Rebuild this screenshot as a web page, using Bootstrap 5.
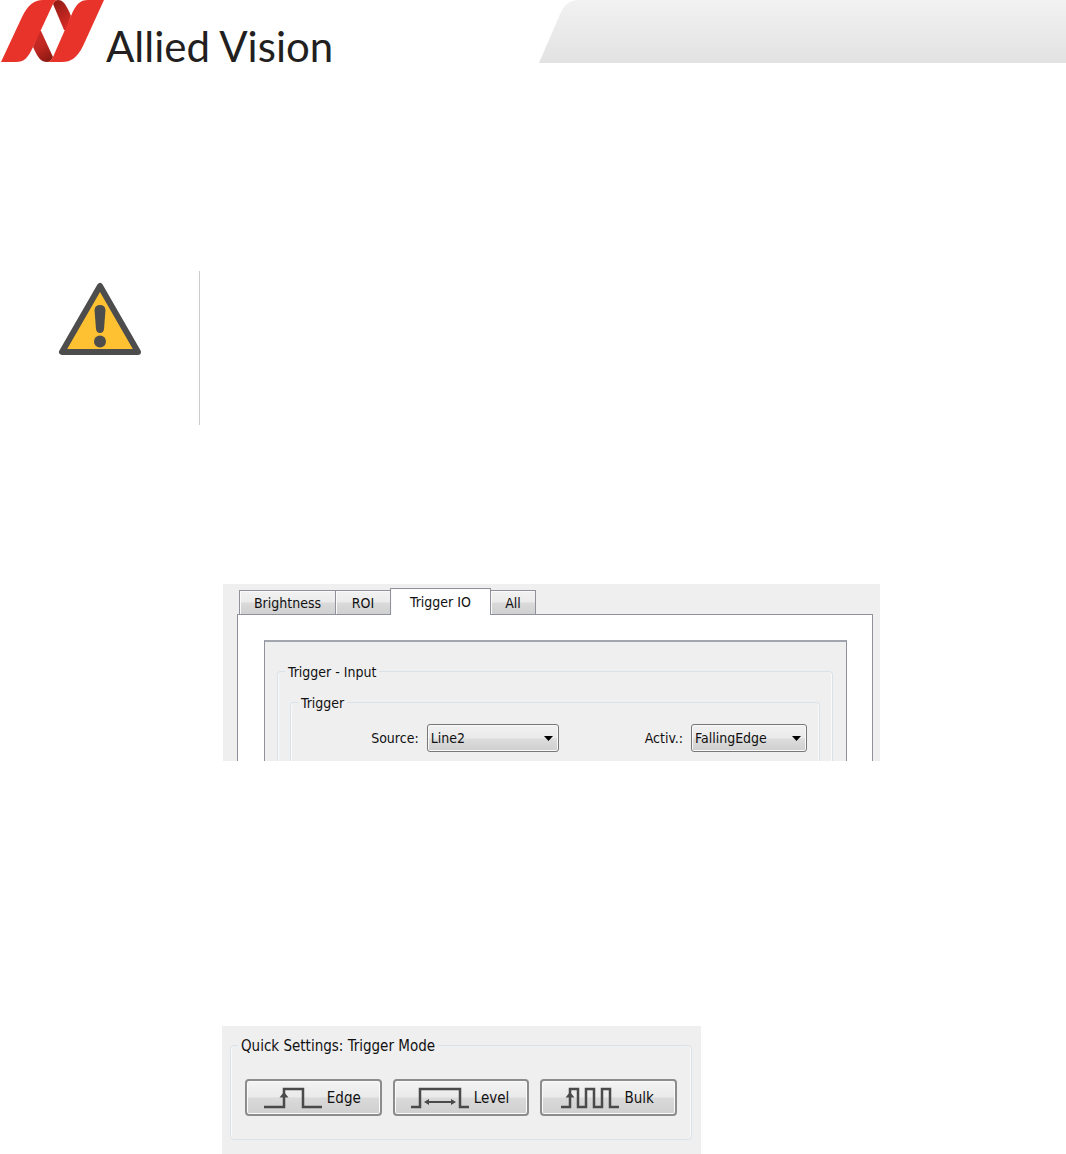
<!DOCTYPE html>
<html lang="en">
<head>
<meta charset="utf-8">
<meta name="viewport" content="width=device-width, initial-scale=1">
<title>Allied Vision</title>
<link href="https://cdn.jsdelivr.net/npm/bootstrap@5.3.0/dist/css/bootstrap.min.css" rel="stylesheet">
<style>
body{font-family:"DejaVu Sans Condensed","DejaVu Sans",sans-serif;font-size:14px;line-height:18px;color:#111;background:#fff}
.brand-text{font-family:Lato,sans-serif;font-size:42px;line-height:48px;color:#231f20;margin:22px 0 -7px 2px}
.brand-col{width:539px}
.band-fill{background:linear-gradient(#f2f2f2,#e2e2e2)}
.notice{margin-top:208px;min-height:154px}
.notice-icon{width:200px;padding:11px 0 0 58px;border-right:1px solid #ccc}
.shot{background:#efefef}
.shot-io{width:657px;margin:159px 0 0 223px;padding:4px 7px 0 14px}
.shot-quick{width:479px;margin:265px 0 0 222px;padding:10px 9px 14px 8px}
.io-tabs{padding-left:2px;border:0;align-items:flex-end;flex-wrap:nowrap}
.io-tabs .nav-link{border:1px solid #8f929c;border-bottom:0;border-radius:0;color:#111;height:24px;padding:3px 0 0;margin:0 0 0 -1px;text-align:center;background:linear-gradient(#f2f2f2 0,#ebebeb 48%,#dadada 52%,#d0d0d0 100%);box-shadow:inset 1px 1px 0 #fafafa}
.io-tabs .nav-link.active{height:27px;padding-top:4px;background:#fff;color:#111;border-color:#8f929c;margin-bottom:-1px;position:relative}
.w-bright{width:97px}.w-roi{width:56px}.w-trig{width:101px}.w-all{width:46px}
.io-page{border:1px solid #8f929c;border-bottom:0;background:#fff;padding:25px 25px 0 26px}
.io-inner{border:1px solid #8f929c;border-top:2px solid #a3a5ae;border-bottom:0;background:#efefef;padding:20px 13px 0 12px}
.grp{border:1px solid #d9e2e9;border-radius:4px;box-shadow:inset 1px 0 0 #fafafa,inset -1px 0 0 #fafafa}
.grp legend{float:none;width:auto;font-size:14px;line-height:16px;margin:0;padding:2px 3px 0}
.grp-outer{border-bottom:0;border-radius:4px 4px 0 0;padding:13px 12px 0}
.grp-outer>legend{margin-left:-5px}
.grp-sub{border-bottom:0;border-radius:4px 4px 0 0;padding:13px 12px 9px}
.grp-sub>legend{margin-left:-5px}
.combo{height:28px;padding:0 24px 1px 3px;font-size:14px;line-height:18px;color:#111;border:1px solid #777;border-radius:3px;box-shadow:inset 0 0 0 1px #f8f8f8;background:url("data:image/svg+xml,%3Csvg xmlns='http://www.w3.org/2000/svg' width='9' height='5'%3E%3Cpath d='M0 0h9L4.5 5z'/%3E%3C/svg%3E") no-repeat right 5px top 11px / 9px 5px,linear-gradient(#f1f1f1 0,#eaeaea 50%,#dcdcdc 54%,#cfcfcf 100%)}
.combo-src{width:132px}.combo-act{width:116px}
.field-gap{gap:86px}.label-gap{gap:8px}
.grp-quick{padding:25px 14px 23px}
.grp.grp-quick>legend{margin-left:-7px;font-size:15px}
.mode-row{gap:11px}
.mode-btn{height:37px;padding:0 2px 0 0;gap:5px;font-size:15px;line-height:18px;color:#111;border:2px solid #8c8c8c;border-radius:4px;box-shadow:inset 0 0 0 1px #fafafa;background:linear-gradient(#f3f3f3 0,#eaeaea 48%,#dadada 52%,#cfcfcf 100%)}
.wave{fill:none;stroke:#4a4a4a;stroke-width:2.5}
.wave .tip{fill:#4a4a4a;stroke:none}
</style>
</head>
<body>
<header class="d-flex">
  <div class="brand-col d-flex flex-shrink-0 align-items-start">
    <svg width="104" height="63" viewBox="0 0 104 63" aria-hidden="true">
      <defs>
        <linearGradient id="foldTop" x1="0" y1="0" x2=".5" y2="1"><stop offset="0" stop-color="#8c1a12"/><stop offset="1" stop-color="#d32b25"/></linearGradient>
        <linearGradient id="foldLow" x1=".3" y1="0" x2=".7" y2="1"><stop offset="0" stop-color="#cf2b25"/><stop offset=".5" stop-color="#bd2620"/><stop offset="1" stop-color="#8c1a12"/></linearGradient>
      </defs>
      <path fill="url(#foldTop)" d="M53 4Q55 0 58 0C63 0 66 4 71 16L66 30H64Z"/>
      <path fill="url(#foldLow)" d="M33 47 39 31H41L53 57Q51 62 47 62C41 62 38 58 33 47Z"/>
      <path fill="#e8332b" d="M1 62 22 17C28 5 34 0 43 0H58Q55 0 53 4L33 47C28 58 24 62 16 62Z"/>
      <path fill="#e8332b" d="M104 0 83 46C77 58 71 62 62 62H47Q51 62 53 57L71 16C76 4 80 0 88 0Z"/>
    </svg>
    <div class="brand-text text-nowrap">Allied Vision</div>
  </div>
  <div class="d-flex flex-grow-1">
    <svg width="40" height="63" viewBox="0 0 40 63" aria-hidden="true">
      <defs><linearGradient id="band" x1="0" y1="0" x2="0" y2="1"><stop offset="0" stop-color="#f2f2f2"/><stop offset="1" stop-color="#e2e2e2"/></linearGradient></defs>
      <path fill="url(#band)" d="M0 63 19 19C24 6 29 0 40 0V63Z"/>
    </svg>
    <div class="band-fill flex-grow-1"></div>
  </div>
</header>
<main>
  <section class="notice d-flex">
    <div class="notice-icon flex-shrink-0">
      <svg width="84" height="74" viewBox="0 0 84 74" role="img" aria-label="Warning">
        <path d="M42 4 4 70H80Z" fill="#fdc132" stroke="#4d4d4d" stroke-width="6" stroke-linejoin="round"/>
        <path d="M36.500 28Q37 23 42 23T47.500 28L46 47Q45.500 51 42 51T38 47Z" fill="#4d4d4d"/>
        <circle cx="42" cy="59.500" r="6" fill="#4d4d4d"/>
      </svg>
    </div>
  </section>

  <section class="shot shot-io">
    <nav class="nav nav-tabs io-tabs">
      <a class="nav-link w-bright ms-0" href="#">Brightness</a>
      <a class="nav-link w-roi" href="#">ROI</a>
      <a class="nav-link w-trig active" href="#" aria-current="page">Trigger IO</a>
      <a class="nav-link w-all" href="#">All</a>
    </nav>
    <div class="io-page">
      <div class="io-inner">
        <fieldset class="grp grp-outer">
          <legend>Trigger - Input</legend>
          <fieldset class="grp grp-sub">
            <legend>Trigger</legend>
            <div class="d-flex justify-content-end field-gap">
              <div class="d-flex align-items-center label-gap">
                <label for="source">Source:</label>
                <select id="source" class="form-select combo combo-src"><option>Line2</option></select>
              </div>
              <div class="d-flex align-items-center label-gap">
                <label for="activ">Activ.:</label>
                <select id="activ" class="form-select combo combo-act"><option>FallingEdge</option></select>
              </div>
            </div>
          </fieldset>
        </fieldset>
      </div>
    </div>
  </section>

  <section class="shot shot-quick">
    <fieldset class="grp grp-quick">
      <legend>Quick Settings: Trigger Mode</legend>
      <div class="d-flex mode-row">
        <button type="button" class="btn mode-btn d-flex align-items-center justify-content-center w-100">
          <svg class="wave" width="58" height="22" viewBox="0 0 58 22" aria-hidden="true"><path d="M0 20H20V2H39V20H58"/><path class="tip" d="M20 5 24.500 10.500H15.500Z"/></svg>Edge
        </button>
        <button type="button" class="btn mode-btn d-flex align-items-center justify-content-center w-100">
          <svg class="wave" width="58" height="22" viewBox="0 0 58 22" aria-hidden="true"><path d="M0 20H9V2H49V20H58"/><path stroke-width="2" d="M16 15H42"/><path class="tip" d="M13 15 18 12V18ZM45 15 40 12V18Z"/></svg>Level
        </button>
        <button type="button" class="btn mode-btn d-flex align-items-center justify-content-center w-100">
          <svg class="wave" width="58" height="22" viewBox="0 0 58 22" aria-hidden="true"><path d="M0 20H9V2H17V20H25V2H33V20H41V2H49V20H58"/><path class="tip" d="M9 5 13.500 10.500H4.500Z"/></svg>Bulk
        </button>
      </div>
    </fieldset>
  </section>
</main>
<script src="https://cdn.jsdelivr.net/npm/bootstrap@5.3.0/dist/js/bootstrap.bundle.min.js"></script>
</body>
</html>
